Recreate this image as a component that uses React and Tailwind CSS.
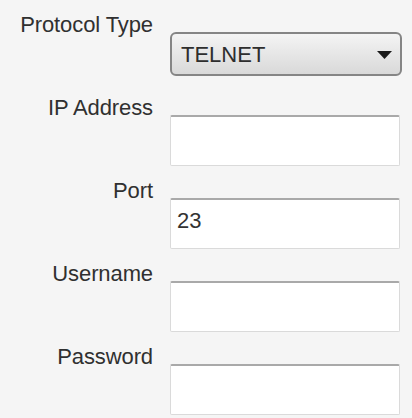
import React from "react";

function Label({ children }) {
  return (
    <div className="w-[153px] shrink-0 text-right tracking-[-0.1px] whitespace-nowrap">
      {children}
    </div>
  );
}

function TextBox({ value }) {
  return (
    <div className="ml-[17px] mt-[18px] w-[230px] h-[51px] bg-white border border-[#dadada] border-t-2 border-t-[#a9a9a9] rounded-[2px] pl-[6px] pt-[10px] text-[#333]">
      {value}
    </div>
  );
}

export default function App() {
  const rows = [
    { label: "IP Address", value: "" },
    { label: "Port", value: "23" },
    { label: "Username", value: "" },
    { label: "Password", value: "" },
  ];
  return (
    <div className="w-[412px] h-[418px] overflow-hidden bg-[#f5f5f5] pt-[14px] font-['Liberation_Sans',Arial,sans-serif] text-[22px] leading-[22px] text-[#303030]">
      <div className="flex h-[83px]">
        <Label>Protocol Type</Label>
        <div className="ml-[17px] mt-[18px] w-[232px] h-[44px] rounded-[6px] border-2 border-[#858585] bg-gradient-to-b from-[#f4f4f4] to-[#d9d9d9] flex items-center justify-between pl-[9px] pr-[8px]">
          <span className="text-[#2e2e2e] pt-[1px]">TELNET</span>
          <svg width="15" height="8" viewBox="0 0 15 8" className="mt-[2px]">
            <polygon points="0,0 15,0 7.5,8" fill="#1a1a1a" />
          </svg>
        </div>
      </div>
      {rows.map((r) => (
        <div key={r.label} className="flex h-[83px]">
          <Label>{r.label}</Label>
          <TextBox value={r.value} />
        </div>
      ))}
    </div>
  );
}
